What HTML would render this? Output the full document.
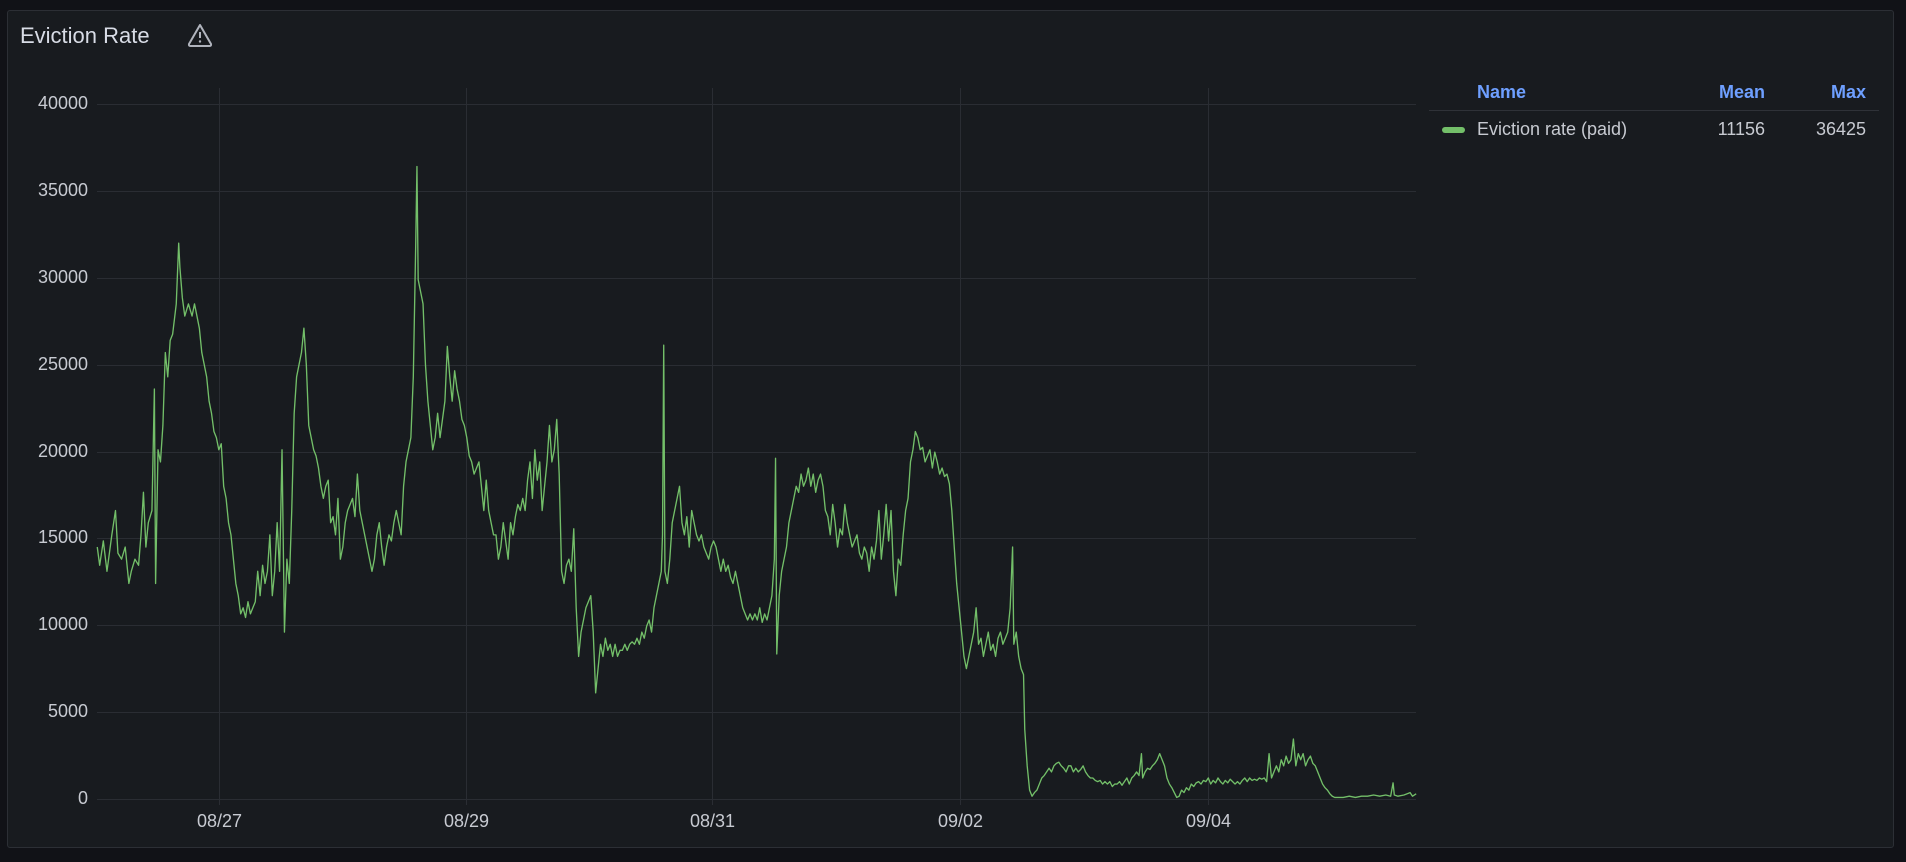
<!DOCTYPE html>
<html><head><meta charset="utf-8"><style>
html,body{margin:0;padding:0;background:#111217;width:1906px;height:862px;overflow:hidden;font-family:"Liberation Sans",sans-serif;}
.panel{position:absolute;left:7px;top:10px;width:1885px;height:836px;background:#181b1f;border:1px solid #2c2f35;border-radius:3px;}
.title{position:absolute;left:20px;top:23px;font-size:22px;color:#d8dce6;}
.t{position:absolute;font-size:18px;color:#c7cad1;}
.lh{position:absolute;font-size:18px;color:#6e9fff;font-weight:bold;}
</style></head><body>
<div class="panel"></div>
<div class="title">Eviction Rate</div>
<svg style="position:absolute;left:186px;top:22px" width="28" height="26" viewBox="0 0 28 26"><path d="M14 3 L25 22 Q25.5 24 23.5 24 L4.5 24 Q2.5 24 3 22 Z" fill="none" stroke="#b0b4bd" stroke-width="2" stroke-linejoin="round"/><line x1="14" y1="10" x2="14" y2="16" stroke="#b0b4bd" stroke-width="2"/><circle cx="14" cy="19.5" r="1.2" fill="#b0b4bd"/></svg>
<svg style="position:absolute;left:0;top:0" width="1906" height="862">
<g stroke="#2a2d33" stroke-width="1">
<line x1="97" y1="104.5" x2="1416" y2="104.5"/><line x1="97" y1="191.5" x2="1416" y2="191.5"/><line x1="97" y1="278.5" x2="1416" y2="278.5"/><line x1="97" y1="365.5" x2="1416" y2="365.5"/><line x1="97" y1="452.5" x2="1416" y2="452.5"/><line x1="97" y1="538.5" x2="1416" y2="538.5"/><line x1="97" y1="625.5" x2="1416" y2="625.5"/><line x1="97" y1="712.5" x2="1416" y2="712.5"/><line x1="97" y1="799.5" x2="1416" y2="799.5"/>
<line x1="219.5" y1="88" x2="219.5" y2="805"/><line x1="466.5" y1="88" x2="466.5" y2="805"/><line x1="712.5" y1="88" x2="712.5" y2="805"/><line x1="960.5" y1="88" x2="960.5" y2="805"/><line x1="1208.5" y1="88" x2="1208.5" y2="805"/>
<line x1="1429" y1="110.5" x2="1879" y2="110.5" stroke="#2f3238"/>
</g>
<g transform="scale(1.2156)">
<polyline fill="none" stroke="#73bf69" stroke-width="1.1" stroke-linejoin="round" points="80,450 82,465 85,445 88,470 92,440 95,420 97,455 100,460 103,450 106,480 108,470 111,460 114,465 116,440 118,405 120,450 122,430 125,420 127,320 128,480 130,370 132,380 134,350 136,290 138,310 140,280 142,275 145,250 147,200 148,220 150,245 152,260 155,250 158,260 160,250 162,260 164,270 166,290 168,300 170,310 172,330 174,340 176,355 178,360 180,370 182,365 184,400 186,410 188,430 190,440 192,460 194,480 196,490 198,505 200,500 202,508 204,495 206,505 208,500 210,495 212,470 214,490 216,465 218,480 220,470 222,440 224,490 226,470 228,430 230,470 232,370 234,520 236,460 238,480 240,420 242,340 244,310 246,300 248,290 250,270 252,300 254,350 256,360 258,370 260,375 262,385 264,400 266,410 268,400 270,395 272,430 274,425 276,440 278,410 280,460 282,450 284,430 286,420 288,415 290,410 292,425 294,390 296,420 298,430 300,440 302,450 304,460 306,470 308,460 310,440 312,430 314,450 316,465 318,450 320,440 322,445 324,430 326,420 328,430 330,440 332,400 334,380 336,370 338,360 340,310 342,200 343,137 344,230 346,240 348,250 350,300 352,330 354,350 356,370 358,360 360,340 362,360 364,345 366,330 368,285 370,310 372,330 374,305 376,320 378,330 380,345 382,350 384,360 386,375 388,380 390,390 392,385 394,380 396,400 398,420 400,395 402,420 404,430 406,440 408,440 410,460 412,450 414,430 416,445 418,460 420,430 422,440 424,425 426,415 428,420 430,410 432,420 434,395 436,380 438,410 440,370 442,395 444,380 446,420 448,400 450,380 452,350 454,380 456,370 458,345 460,390 462,470 464,480 466,465 468,460 470,470 472,435 474,500 476,540 478,520 480,510 482,500 484,495 486,490 488,520 490,570 492,550 494,530 496,540 498,525 500,535 502,530 504,540 506,530 508,540 510,535 512,535 514,530 516,535 518,530 520,528 522,530 524,525 526,530 528,520 530,525 532,515 534,510 536,520 538,500 540,490 542,480 544,470 545,440 546,284 547,470 549,480 551,460 553,430 555,420 557,410 559,400 561,430 563,440 565,425 567,450 569,420 571,430 573,440 575,445 577,440 579,450 581,455 583,460 585,450 587,445 589,450 591,460 593,470 595,460 597,470 599,465 601,475 603,480 605,470 607,480 609,490 611,500 613,505 615,510 617,505 619,510 621,505 623,510 625,500 627,512 629,505 631,510 633,500 635,490 637,460 638,377 639,538 641,490 643,470 645,460 647,450 649,430 651,420 653,410 655,400 657,405 659,390 661,400 663,395 665,385 667,400 669,390 671,405 673,395 675,390 677,400 679,420 681,425 683,440 685,415 687,430 689,450 691,435 693,440 695,415 697,430 699,440 701,450 703,445 705,440 707,455 709,460 711,450 713,455 715,470 717,450 719,460 721,445 723,420 725,460 727,440 729,415 731,445 733,420 735,470 737,490 739,460 741,465 743,440 745,420 747,410 749,380 751,370 753,355 755,360 757,370 759,368 761,380 763,375 765,370 767,385 769,372 771,380 773,390 775,385 777,392 779,390 781,398 783,420 785,450 787,480 789,500 791,520 793,540 795,550 797,540 799,530 801,520 803,500 805,530 807,525 809,540 811,530 813,520 815,535 817,530 819,540 821,525 823,520 825,530 827,525 829,520 831,500 833,450 834,530 836,520 838,540 840,550 842,555 843,600 845,630 847,650 849,655 851,652 853,650 855,645 857,640 859,638 861,635 863,632 865,635 867,630 869,628 871,627 873,630 875,632 877,635 879,630 881,630 883,635 885,632 887,635 889,633 891,630 893,635 895,638 897,640 899,640 901,642 903,643 905,642 907,645 909,643 911,645 913,643 915,647 917,645 919,645 921,643 923,646 925,643 927,640 929,645 931,640 933,638 935,635 937,638 939,620 940,640 942,635 944,632 946,633 948,630 950,628 952,625 954,620 956,625 958,630 960,640 962,645 964,648 966,652 968,656 970,655 972,650 974,652 976,648 978,650 980,645 982,647 984,644 986,643 988,645 990,642 992,643 994,640 996,645 998,642 1000,644 1002,640 1004,643 1006,645 1008,642 1010,644 1012,641 1014,643 1016,645 1018,643 1020,645 1022,642 1024,640 1026,643 1028,640 1030,642 1032,641 1034,642 1036,640 1038,641 1040,640 1042,643 1044,620 1046,640 1048,635 1050,630 1052,635 1054,625 1056,630 1058,622 1060,628 1062,625 1064,608 1066,630 1068,620 1070,625 1072,620 1074,630 1076,625 1078,622 1080,628 1082,630 1084,635 1086,640 1088,645 1090,648 1092,650 1094,653 1096,655 1098,656 1105,656 1110,655 1115,656 1120,655 1125,655 1130,654 1135,655 1140,654 1144,655 1146,644 1147,654 1150,655 1155,654 1160,652 1162,655 1165,653"/>
</g>
</svg>
<div class="t" style="right:1818px;top:93px">40000</div>
<div class="t" style="right:1818px;top:180px">35000</div>
<div class="t" style="right:1818px;top:267px">30000</div>
<div class="t" style="right:1818px;top:354px">25000</div>
<div class="t" style="right:1818px;top:441px">20000</div>
<div class="t" style="right:1818px;top:527px">15000</div>
<div class="t" style="right:1818px;top:614px">10000</div>
<div class="t" style="right:1818px;top:701px">5000</div>
<div class="t" style="right:1818px;top:788px">0</div>
<div class="t" style="left:197px;top:811px">08/27</div>
<div class="t" style="left:444px;top:811px">08/29</div>
<div class="t" style="left:690px;top:811px">08/31</div>
<div class="t" style="left:938px;top:811px">09/02</div>
<div class="t" style="left:1186px;top:811px">09/04</div>
<div class="lh" style="left:1477px;top:82px">Name</div>
<div class="lh" style="right:141px;top:82px">Mean</div>
<div class="lh" style="right:40px;top:82px">Max</div>
<div style="position:absolute;left:1442px;top:127px;width:23px;height:6px;border-radius:3px;background:#73bf69"></div>
<div class="t" style="left:1477px;top:119px">Eviction rate (paid)</div>
<div class="t" style="right:141px;top:119px">11156</div>
<div class="t" style="right:40px;top:119px">36425</div>
</body></html>
